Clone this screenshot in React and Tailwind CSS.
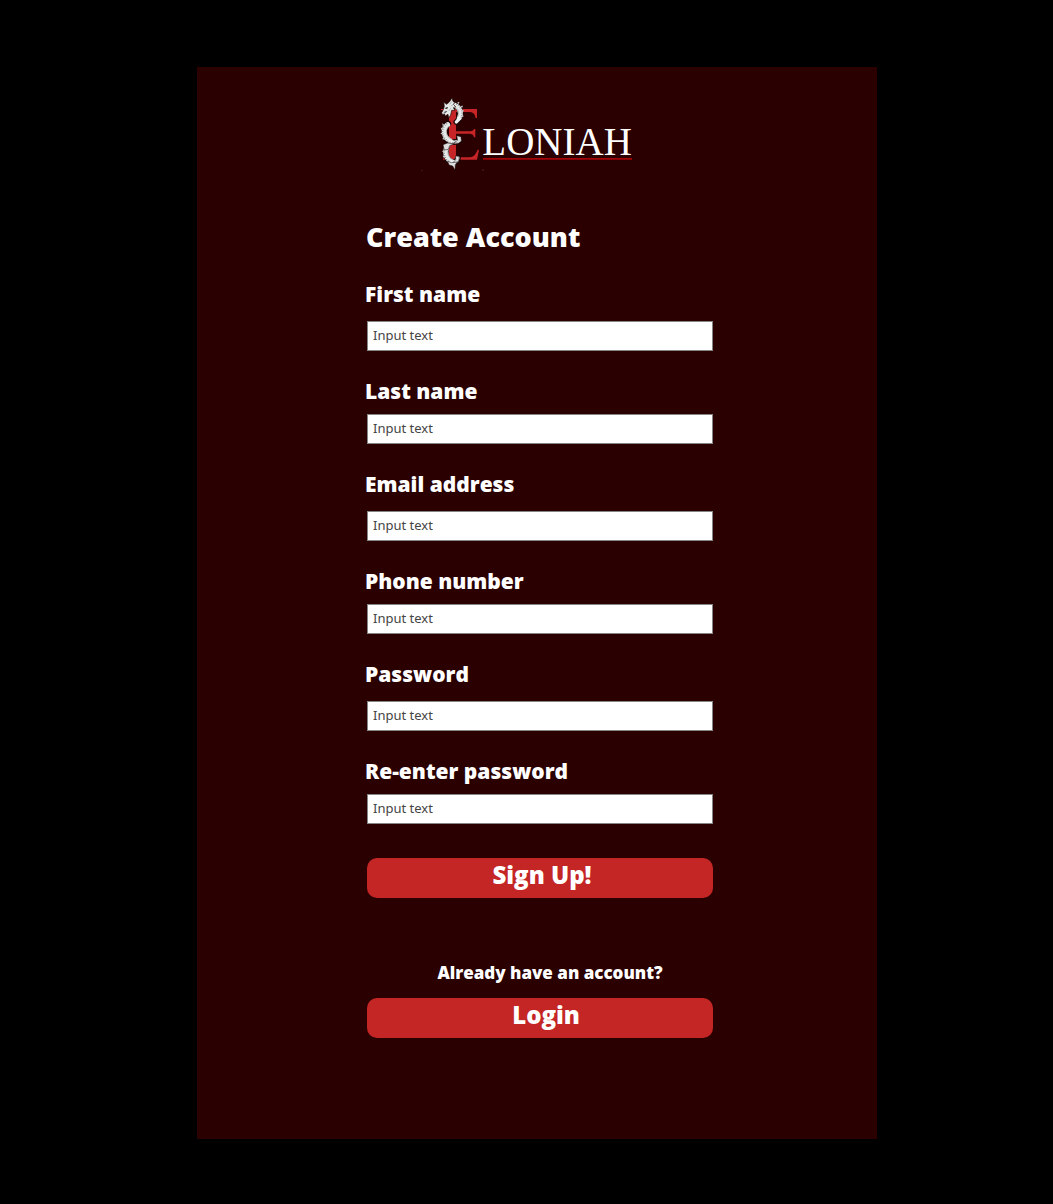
const fields = [
  { id: 'first-name', label: 'First name', type: 'text', gap: 'gap-[13px]' },
  { id: 'last-name', label: 'Last name', type: 'text', gap: 'gap-[9px]' },
  { id: 'email', label: 'Email address', type: 'email', gap: 'gap-[13px]' },
  { id: 'phone', label: 'Phone number', type: 'tel', gap: 'gap-[9px]' },
  { id: 'password', label: 'Password', type: 'password', gap: 'gap-[13px]' },
  { id: 'password-again', label: 'Re-enter password', type: 'password', gap: 'gap-[9px]' },
];

function Logo() {
  return (
    <svg className="h-20 w-[216px]" viewBox="15 15 648 240" role="img" aria-label="Eloniah">
      {/* Initial letter frame */}
      <path
        fill="#c62427"
        d="M78 57H186V84H182C179 70 174 66 160 66H123V124H160C171 124 175 122 177 117H181V142H177C175 134 171 131 160 131H123V194C123 200 128 202 138 202H160C174 202 181 196 188 179H192L186 209H84V205C98 204 102 201 102 192V74C102 65 96 61 78 60Z"
      />
      {/* Body coils: outline, skin, then scales */}
      <g fill="none" strokeLinecap="round" strokeLinejoin="round">
        <g stroke="#170607" strokeWidth="17">
          <path d="M112 45C132 45 142 66 133 84Q130 92 124 96" />
          <path d="M100 101C80 113 84 144 105 154Q119 160 134 151" />
          <path d="M96 168C86 187 95 211 111 217Q125 219 129 205" />
        </g>
        <g stroke="#e6e8e8" strokeWidth="15">
          <path d="M112 45C132 45 142 66 133 84" />
          <path d="M98 104C82 115 85 143 105 152" />
          <path d="M96 170C87 187 95 209 110 215" />
        </g>
        <g stroke="#f0f1f1" strokeWidth="10">
          <path d="M133 84Q130 91 124 96" />
          <path d="M104 153Q122 161 134 151" />
          <path d="M110 215Q126 218 129 204" />
        </g>
        <g stroke="#6b6e70" strokeWidth="5" strokeDasharray="2 5" strokeLinecap="butt">
          <path d="M116 40C140 43 147 66 138 87" />
          <path d="M96 100C75 114 79 145 103 157Q120 163 134 154" />
          <path d="M91 168C81 187 90 213 109 219" />
        </g>
        <g stroke="#8b8e90" strokeWidth="1.5">
          <path d="M116 50C129 52 135 66 128 80" />
          <path d="M102 108C89 119 92 139 108 148" />
          <path d="M101 172C94 188 99 202 113 210" />
        </g>
      </g>
      {/* Spines along the outer edge of the coils */}
      <g fill="#c9cccd">
        <path d="M126 38L133 35L132 42ZM137 48L144 47L141 54ZM141 60L148 62L142 67ZM141 74L147 79L139 81Z" />
        <path d="M87 103L82 100L83 108ZM83 114L77 113L80 121ZM82 128L76 129L82 135ZM86 143L81 147L90 149Z" />
        <path d="M86 180L81 184L87 189ZM87 195L83 201L90 204Z" />
      </g>
      {/* Tail fins */}
      <g fill="#dedfe0" stroke="#170607" strokeWidth="1.5" strokeLinejoin="round">
        <path d="M84 164L98 159L118 161L104 167L100 178L88 180Z" />
        <path d="M125 137L138 140L139 153L130 160L116 158L128 151Z" />
        <path d="M122 197L133 201L131 213L124 219L114 218L122 209Z" />
        <path d="M98 213L109 218L127 216L121 224L120 240L113 228L102 225Z" />
      </g>
      {/* Horned head */}
      <path
        fill="#e7e9e9"
        stroke="#170607"
        strokeWidth="2"
        strokeLinejoin="round"
        d="M80 68L85 59L88 49L86 37L95 43L103 36L111 24L114 34L119 38L115 43L122 50L115 53L120 61L110 61L107 75L101 84L99 73L91 78L88 71L83 75Z"
      />
      <path fill="#242021" d="M91 53L99 51L97 56L91 57ZM85 67L97 62L92 68Z" />
      <path fill="none" stroke="#7b7f81" strokeWidth="1.5" d="M104 43L111 34M107 49L114 44M101 63L108 54M95 45L91 40" />
      <text x="202" y="194" fill="#ffffff" fontFamily="'Liberation Serif', serif" fontSize="117">
        LONIAH
      </text>
      <path fill="#a40308" d="M204 204H651V209H204Z" />
      <path fill="#4b2524" d="M19 241H23V244H19ZM202 238H206V242H202Z" />
    </svg>
  );
}

function ActionButton({ type, inset, children }) {
  return (
    <button
      type={type}
      className={`ml-1 flex h-10 items-start justify-center rounded-[10px] bg-[#c42525] text-2xl leading-[34px] font-extrabold ${inset}`}
    >
      {children}
    </button>
  );
}

export default function App() {
  return (
    <div className="flex min-h-screen items-start justify-center bg-black pt-[67px] pb-[65px] pl-[21px] font-['Open_Sans',sans-serif] text-white">
      <main className="flex w-full max-w-[680px] flex-col items-center bg-[#2a0001] pt-7 pb-[101px] pl-0.5">
        <div className="w-full max-w-[350px]">
          <div className="flex pl-[57px]">
            <Logo />
          </div>
          <form className="mt-11 flex flex-col" onSubmit={(e) => e.preventDefault()}>
            <h1 className="pl-[3px] text-[27px] leading-9 font-extrabold">Create Account</h1>
            <div className="mt-[26px] flex flex-col gap-[27px]">
              {fields.map((f) => (
                <div key={f.id} className={`flex flex-col ${f.gap}`}>
                  <label htmlFor={f.id} className="pl-0.5 text-[21px] leading-[27px] font-extrabold">
                    {f.label}
                  </label>
                  <input
                    id={f.id}
                    type={f.type}
                    placeholder="Input text"
                    className="ml-1 h-[30px] border border-[#858585] bg-white px-[5px] pb-0.5 font-['Noto_Sans',sans-serif] text-[13px] text-[#444444] placeholder:text-[#444444]"
                  />
                </div>
              ))}
            </div>
            <div className="mt-[34px] flex flex-col">
              <ActionButton type="submit" inset="pl-1">
                Sign Up!
              </ActionButton>
            </div>
          </form>
          <section className="mt-[61px] flex flex-col">
            <p className="pl-6 text-center text-[17px] leading-7 font-extrabold">Already have an account?</p>
            <div className="mt-[11px] flex flex-col">
              <ActionButton type="button" inset="pl-3">
                Login
              </ActionButton>
            </div>
          </section>
        </div>
      </main>
    </div>
  );
}
